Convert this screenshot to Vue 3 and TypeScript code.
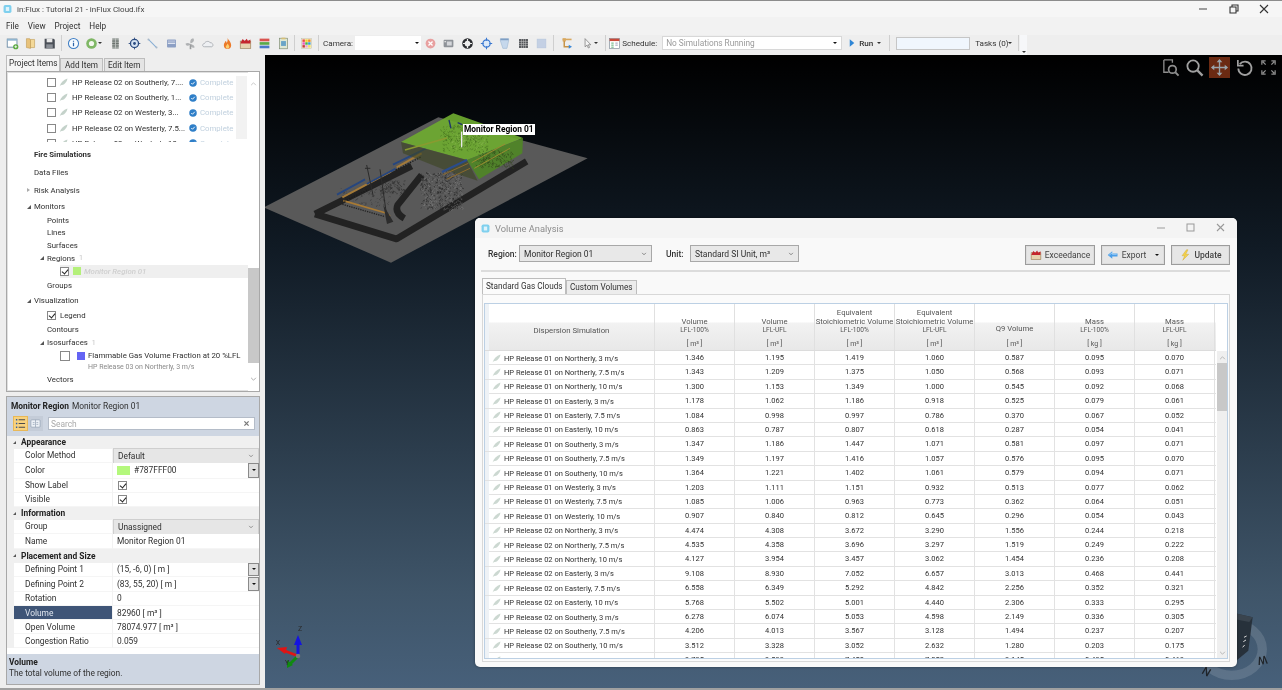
<script setup lang="ts">
// in:Flux main window with the Volume Analysis dialog floating over the 3D view

interface ToolIcon {
  svg: string;
  caret?: boolean;
}

const ic = {
  add: '<rect x="1.5" y="2.5" width="12" height="10" fill="#fff" stroke="#5b7f9c"/><rect x="1.5" y="2.5" width="12" height="2" fill="#8fb4d0"/><circle cx="12" cy="12" r="3.2" fill="#58a83c"/><path d="M10.3 12h3.4M12 10.3v3.4" stroke="#fff"/>',
  folder: '<path d="M3 2h4l1 2v10l-5-1z" fill="#e8c27a" stroke="#b58a3c" stroke-width=".6"/><path d="M8 3h5v10H8z" fill="#f3d898" stroke="#b58a3c" stroke-width=".6"/>',
  save: '<path d="M2 2h11l1.500 1.500V14H2z" fill="#4a4f57"/><rect x="4.500" y="2" width="7" height="4.500" fill="#e8e8e8"/><rect x="4" y="9" width="8" height="5" fill="#8a8f96"/>',
  info: '<circle cx="8" cy="8" r="6.200" fill="#f7fbff" stroke="#3f7ec4" stroke-width="1.300"/><path d="M8 4.500v1.300M8 7v4.500" stroke="#2a62a8" stroke-width="1.500"/>',
  play: '<circle cx="8" cy="8" r="6.500" fill="#7fb765"/><circle cx="8" cy="8" r="3.200" fill="#f2f7ee"/>',
  rack: '<rect x="4" y="1.500" width="8" height="13" fill="#9aa09c"/><path d="M4 5h8M4 8h8M4 11h8" stroke="#5f6663"/><path d="M8 1.500v13" stroke="#c5c9c6"/>',
  target: '<circle cx="8" cy="8" r="5" fill="#d6e3f2" stroke="#2b4b80" stroke-width="1.600"/><circle cx="8" cy="8" r="1.700" fill="#2b4b80"/><path d="M8 .8v3M8 12.200v3M.8 8h3M12.200 8h3" stroke="#2b4b80" stroke-width="1.100"/>',
  line: '<path d="M3 3l10 10" stroke="#88aed4" stroke-width="1.300"/><circle cx="3" cy="3" r="1.200" fill="#a8b8c8"/><circle cx="13" cy="13" r="1.200" fill="#a8b8c8"/>',
  box: '<rect x="2.500" y="3" width="11" height="10" rx="1" fill="#8c9fc4"/><rect x="3.500" y="7" width="9" height="1.500" fill="#e4e9f3"/><rect x="3.500" y="4" width="9" height="2.200" fill="#aebbd6"/>',
  fan: '<path d="M8 9c-3 3-6 2-6-1 2-1 4-1 6 1zM8 8C7 4 9 1 12 2c1 3-1 5-4 6zM8 9c2 0 5 1 5 4-3 1-5-1-5-4z" fill="#b0b2b4"/><rect x="7" y="9" width="2" height="6" fill="#9a9c9e"/>',
  cloud: '<path d="M3 12c-3 0-3-3.500 0-4 1-3 6-3.500 7-1 3-.5 5 4 2 5z" fill="#eef0f3" stroke="#a4a8ae"/>',
  flame: '<path d="M8 1c1 3 4.500 5 4.500 9A4.500 4.500 0 0 1 3.500 10C3.500 7.500 5 7 5.500 5c1 .5 1.500 1.500 1.500 2.500C8 6 8.500 3.500 8 1z" fill="#ec7a2a"/><path d="M8 8c1 1.500 2.200 2.500 2.200 4a2.200 2.200 0 0 1-4.400 0C5.800 11 7.500 10 8 8z" fill="#fbd070"/>',
  exceed: '<rect x="1.500" y="5" width="13" height="9" fill="#e6d2ae" stroke="#8c6f45" stroke-width=".7"/><path d="M2 7l2.500-4.500L7 5l2.500-3L11 5l3-2v5H2z" fill="#c4262e"/>',
  stack: '<rect x="2" y="2" width="12" height="3.300" fill="#d9534f"/><rect x="2" y="6.300" width="12" height="3.300" fill="#5aa84a"/><rect x="2" y="10.600" width="12" height="3.300" fill="#4a78c8"/>',
  report: '<rect x="3" y="1.500" width="10" height="13" fill="#dfe8d4" stroke="#7c8a70" stroke-width=".8"/><rect x="5" y="5" width="6" height="6" fill="#6aa5c8"/><rect x="5.500" y=".8" width="5" height="2" fill="#d8c078"/>',
  palette: '<rect x="2" y="2" width="12" height="12" fill="#f4f0d4" stroke="#b8b498" stroke-width=".5"/><rect x="3" y="3" width="3" height="3" fill="#e84a4a"/><rect x="6.500" y="3" width="3" height="3" fill="#f4d030"/><rect x="10" y="3" width="3" height="3" fill="#f08a2a"/><rect x="3" y="6.500" width="3" height="3" fill="#e85ac8"/><rect x="6.500" y="6.500" width="3" height="3" fill="#4ab848"/><rect x="10" y="6.500" width="3" height="3" fill="#3a9ae0"/><rect x="3" y="10" width="3" height="3" fill="#c83a3a"/><rect x="6.500" y="10" width="3" height="3" fill="#e8a8d8"/><rect x="10" y="10" width="3" height="3" fill="#f4e060"/>',
  stop: '<circle cx="8" cy="8" r="6" fill="#e8a0a0"/><path d="M5.500 5.500l5 5M10.500 5.500l-5 5" stroke="#fff" stroke-width="1.600"/>',
  film: '<rect x="2" y="3.500" width="12" height="9" rx="1" fill="#8e9298"/><rect x="6" y="5.500" width="6" height="5" fill="#d4d6da"/><rect x="3" y="5" width="2" height="1.500" fill="#e4e4e4"/>',
  ring: '<circle cx="8" cy="8" r="5" fill="none" stroke="#2a2c30" stroke-width="3"/><path d="M8 2.500v2.500M8 11v2.500M2.500 8H5M11 8h2.500" stroke="#eee" stroke-width="1.500"/>',
  aim: '<circle cx="8" cy="8" r="4.500" fill="#dce9f8" stroke="#3a78d0" stroke-width="1.500"/><path d="M8 1v3.500M8 11.500V15M1 8h3.500M11.500 8H15" stroke="#3a78d0" stroke-width="1.300"/>',
  page: '<path d="M3 2h10v3l-2 9H6L3 5z" fill="#c6d8ec" stroke="#9ab4d0" stroke-width=".7"/><rect x="3" y="2" width="10" height="2" fill="#7f9fc4"/>',
  grid: '<rect x="2.500" y="2.500" width="11" height="11" fill="#55585c"/><path d="M2.500 5.500h11M2.500 8h11M2.500 10.500h11M5.500 2.500v11M8 2.500v11M10.500 2.500v11" stroke="#ccc" stroke-width=".6"/>',
  hatch: '<rect x="2.500" y="2.500" width="11" height="11" fill="#c4d0e4" stroke="#b4c2da" stroke-width=".5"/>',
  tree: '<rect x="2" y="1.500" width="4" height="4" fill="#d8a860"/><path d="M4 5v7h6" fill="none" stroke="#c89448" stroke-width="1.800"/><path d="M2 2h11v2H2z" fill="#d8a860"/><path d="M9.500 9.500l4 2.500-4 2.500z" fill="#3a88d8"/>',
  cursor: '<path d="M5 2v10l2.500-2 1.500 3.500 1.500-.7L9 9.500h3z" fill="#f4f4f4" stroke="#6a6a6a" stroke-width=".8"/>',
  calendar: '<rect x="2" y="2" width="12" height="12" fill="#fff" stroke="#7c8a98" stroke-width=".8"/><rect x="2" y="2" width="12" height="3" fill="#c84a3a"/><path d="M4 7.500h3M4 10h3M4 12.500h3" stroke="#3a9a5a"/><path d="M9 7.500h3M9 10h3" stroke="#88a"/>',
};

const fileTools: ToolIcon[] = [{ svg: ic.add }, { svg: ic.folder }, { svg: ic.save }];
const itemTools: ToolIcon[] = [
  { svg: ic.info },
  { svg: ic.play, caret: true },
  { svg: ic.rack },
  { svg: ic.target },
  { svg: ic.line },
  { svg: ic.box },
  { svg: ic.fan },
  { svg: ic.cloud },
  { svg: ic.flame },
  { svg: ic.exceed },
  { svg: ic.stack },
  { svg: ic.report },
];
const viewTools: ToolIcon[] = [
  { svg: ic.stop },
  { svg: ic.film },
  { svg: ic.ring },
  { svg: ic.aim },
  { svg: ic.page },
  { svg: ic.grid },
  { svg: ic.hatch },
];

const releases = [
  "HP Release 02 on Southerly, 7....",
  "HP Release 02 on Southerly, 1...",
  "HP Release 02 on Westerly, 3...",
  "HP Release 02 on Westerly, 7.5...",
  "HP Release 02 on Westerly, 10...",
];

interface TreeRow {
  label: string;
  x: number;
  h: number;
  bold?: boolean;
  arrow?: "open" | "closed";
  count?: string;
  check?: boolean;
  empty?: boolean;
  swatch?: string;
  ghost?: boolean;
  sub?: boolean;
}

// Heights come from the row spacing of the real tree, which is not regular
const treeRows: TreeRow[] = [
  { label: "Fire Simulations", x: 34, h: 17, bold: true },
  { label: "Data Files", x: 34, h: 18 },
  { label: "Risk Analysis", x: 34, h: 18, arrow: "closed" },
  { label: "Monitors", x: 34, h: 15, arrow: "open" },
  { label: "Points", x: 47, h: 12.5 },
  { label: "Lines", x: 47, h: 12.5 },
  { label: "Surfaces", x: 47, h: 13 },
  { label: "Regions", x: 47, h: 12.5, arrow: "open", count: "1" },
  { label: "Monitor Region 01", x: 60, h: 13, check: true, swatch: "#b4f07a", ghost: true },
  { label: "Groups", x: 47, h: 15 },
  { label: "Visualization", x: 34, h: 16.5, arrow: "open" },
  { label: "Legend", x: 47, h: 13.5, check: true },
  { label: "Contours", x: 47, h: 13 },
  { label: "Isosurfaces", x: 47, h: 14, arrow: "open", count: "1" },
  { label: "Flammable Gas Volume Fraction at 20 %LFL", x: 60, h: 12, empty: true, swatch: "#6464f4" },
  { label: "HP Release 03 on Northerly, 3 m/s", x: 88, h: 11, sub: true },
  { label: "Vectors", x: 47, h: 13 },
];

interface PropRow {
  label: string;
  h: number;
  kind: "section" | "text" | "combo" | "color" | "check" | "drop";
  value?: string;
  active?: boolean;
}

const propRows: PropRow[] = [
  { label: "Appearance", h: 12.5, kind: "section" },
  { label: "Color Method", h: 14.5, kind: "combo", value: "Default" },
  { label: "Color", h: 15.5, kind: "color", value: "#787FFF00" },
  { label: "Show Label", h: 14.5, kind: "check" },
  { label: "Visible", h: 13.5, kind: "check" },
  { label: "Information", h: 13, kind: "section" },
  { label: "Group", h: 14.5, kind: "combo", value: "Unassigned" },
  { label: "Name", h: 15, kind: "text", value: "Monitor Region 01" },
  { label: "Placement and Size", h: 13.5, kind: "section" },
  { label: "Defining Point 1", h: 14, kind: "drop", value: "(15, -6, 0) [ m ]" },
  { label: "Defining Point 2", h: 15, kind: "drop", value: "(83, 55, 20) [ m ]" },
  { label: "Rotation", h: 14.5, kind: "text", value: "0" },
  { label: "Volume", h: 14, kind: "text", value: "82960 [ m³ ]", active: true },
  { label: "Open Volume", h: 14, kind: "text", value: "78074.977 [ m³ ]" },
  { label: "Congestion Ratio", h: 14, kind: "text", value: "0.059" },
];

const columns = [
  { top: [], name: "Volume", sub: "LFL-100%", unit: "[ m³ ]" },
  { top: [], name: "Volume", sub: "LFL-UFL", unit: "[ m³ ]" },
  { top: ["Equivalent"], name: "Stoichiometric Volume", sub: "LFL-100%", unit: "[ m³ ]" },
  { top: ["Equivalent"], name: "Stoichiometric Volume", sub: "LFL-UFL", unit: "[ m³ ]" },
  { top: [], name: "Q9 Volume", sub: "", unit: "[ m³ ]" },
  { top: [], name: "Mass", sub: "LFL-100%", unit: "[ kg ]" },
  { top: [], name: "Mass", sub: "LFL-UFL", unit: "[ kg ]" },
];

const results: [string, string][] = [
  ["HP Release 01 on Northerly, 3 m/s", "1.346 1.195 1.419 1.060 0.587 0.095 0.070"],
  ["HP Release 01 on Northerly, 7.5 m/s", "1.343 1.209 1.375 1.050 0.568 0.093 0.071"],
  ["HP Release 01 on Northerly, 10 m/s", "1.300 1.153 1.349 1.000 0.545 0.092 0.068"],
  ["HP Release 01 on Easterly, 3 m/s", "1.178 1.062 1.186 0.918 0.525 0.079 0.061"],
  ["HP Release 01 on Easterly, 7.5 m/s", "1.084 0.998 0.997 0.786 0.370 0.067 0.052"],
  ["HP Release 01 on Easterly, 10 m/s", "0.863 0.787 0.807 0.618 0.287 0.054 0.041"],
  ["HP Release 01 on Southerly, 3 m/s", "1.347 1.186 1.447 1.071 0.581 0.097 0.071"],
  ["HP Release 01 on Southerly, 7.5 m/s", "1.349 1.197 1.416 1.057 0.576 0.095 0.070"],
  ["HP Release 01 on Southerly, 10 m/s", "1.364 1.221 1.402 1.061 0.579 0.094 0.071"],
  ["HP Release 01 on Westerly, 3 m/s", "1.203 1.111 1.151 0.932 0.513 0.077 0.062"],
  ["HP Release 01 on Westerly, 7.5 m/s", "1.085 1.006 0.963 0.773 0.362 0.064 0.051"],
  ["HP Release 01 on Westerly, 10 m/s", "0.907 0.840 0.812 0.645 0.296 0.054 0.043"],
  ["HP Release 02 on Northerly, 3 m/s", "4.474 4.308 3.672 3.290 1.556 0.244 0.218"],
  ["HP Release 02 on Northerly, 7.5 m/s", "4.535 4.358 3.696 3.297 1.519 0.249 0.222"],
  ["HP Release 02 on Northerly, 10 m/s", "4.127 3.954 3.457 3.062 1.454 0.236 0.208"],
  ["HP Release 02 on Easterly, 3 m/s", "9.108 8.930 7.052 6.657 3.013 0.468 0.441"],
  ["HP Release 02 on Easterly, 7.5 m/s", "6.558 6.349 5.292 4.842 2.256 0.352 0.321"],
  ["HP Release 02 on Easterly, 10 m/s", "5.768 5.502 5.001 4.440 2.306 0.333 0.295"],
  ["HP Release 02 on Southerly, 3 m/s", "6.278 6.074 5.053 4.598 2.149 0.336 0.305"],
  ["HP Release 02 on Southerly, 7.5 m/s", "4.206 4.013 3.567 3.128 1.494 0.237 0.207"],
  ["HP Release 02 on Southerly, 10 m/s", "3.512 3.328 3.052 2.632 1.280 0.203 0.175"],
  ["HP Release 02 on Westerly, 3 m/s", "9.795 9.593 7.450 7.052 3.145 0.495 0.468"],
];

// Deterministic scatter of short strokes for the plant equipment in the 3D view
function clutter(seed: number, count: number, cx: number, cy: number, w: number, h: number): string {
  let s = seed;
  const next = () => {
    s = (s * 9301 + 49297) % 233280;
    return s / 233280;
  };
  let d = "";
  for (let i = 0; i < count; i++) {
    const x = cx + (next() - 0.5) * w;
    const y = cy + (next() - 0.5) * h;
    const dx = (next() - 0.5) * 12;
    const dy = (next() - 0.5) * 12;
    d += `M${x.toFixed(1)} ${y.toFixed(1)}l${dx.toFixed(1)} ${dy.toFixed(1)}`;
  }
  return d;
}

const towerDark = clutter(7, 300, 530, 303, 125, 110);
const towerLight = clutter(61, 260, 530, 303, 125, 110);
const boxDark = clutter(19, 230, 600, 145, 140, 80);
const boxLight = clutter(83, 70, 610, 150, 100, 50);
const sideMess = clutter(31, 150, 690, 207, 105, 50);
const craneMess = clutter(43, 110, 385, 292, 75, 40);
const rackMess = clutter(97, 90, 300, 320, 150, 50);
</script>

<template>
  <div class="app">
    <div class="titlebar">
      <svg class="title-icon" viewBox="0 0 16 16">
        <rect x="1" y="1" width="14" height="14" rx="3" fill="#7fd0ee" />
        <rect x="5" y="4.500" width="6" height="7" fill="#dff3fb" />
      </svg>
      <span class="title-text">in:Flux : Tutorial 21 - inFlux Cloud.ifx</span>
      <div class="win-controls">
        <svg viewBox="0 0 30 14"><path d="M10 7h8" stroke="#444" stroke-width="1" /></svg>
        <svg viewBox="0 0 30 14"><path d="M11 5h6v6h-6zM13 5V3h6v6h-2" fill="none" stroke="#333" stroke-width="1.100" /></svg>
        <svg viewBox="0 0 30 14"><path d="M11 3l8 8M19 3l-8 8" stroke="#333" stroke-width="1.100" /></svg>
      </div>
    </div>

    <div class="menubar">
      <span>File</span><span>View</span><span>Project</span><span>Help</span>
    </div>

    <div class="toolbar">
      <div class="tool-group first">
        <div v-for="(t, i) in fileTools" :key="i" class="tool"><svg viewBox="0 0 16 16" v-html="t.svg"></svg></div>
      </div>
      <i class="tsep"></i>
      <div class="tool-group">
        <div v-for="(t, i) in itemTools" :key="i" class="tool" :class="{ 'has-caret': t.caret }">
          <svg viewBox="0 0 16 16" v-html="t.svg"></svg>
          <b v-if="t.caret" class="mini-caret over"></b>
        </div>
      </div>
      <i class="tsep"></i>
      <div class="tool"><svg viewBox="0 0 16 16" v-html="ic.palette"></svg></div>
      <i class="tsep"></i>
      <span class="tb-label camera">Camera:</span>
      <div class="camera-box"><b class="mini-caret dark"></b></div>
      <div class="tool-group cams">
        <div v-for="(t, i) in viewTools" :key="i" class="tool"><svg viewBox="0 0 16 16" v-html="t.svg"></svg></div>
      </div>
      <i class="tsep"></i>
      <div class="tool wide first-wide"><svg viewBox="0 0 16 16" v-html="ic.tree"></svg></div>
      <div class="tool wide">
        <svg viewBox="0 0 16 16" v-html="ic.cursor"></svg>
        <b class="mini-caret over"></b>
      </div>
      <i class="tsep after-cursor"></i>
      <div class="tool cal"><svg viewBox="0 0 16 16" v-html="ic.calendar"></svg></div>
      <span class="tb-label schedule">Schedule:</span>
      <div class="sim-box">No Simulations Running<b class="mini-caret dark"></b></div>
      <svg class="run-icon" viewBox="0 0 8 12"><path d="M1 1l6 5-6 5z" fill="#2f86d6" /></svg>
      <span class="tb-label run">Run</span>
      <b class="mini-caret"></b>
      <i class="tsep run-sep"></i>
      <div class="progress"></div>
      <span class="tb-label tasks">Tasks (0)</span>
      <b class="mini-caret"></b>
      <i class="tsep task-sep"></i>
      <div class="overflow"><b class="mini-caret"></b></div>
    </div>

    <div class="main">
      <aside class="side">
        <div class="tabs">
          <span class="tab active">Project Items</span>
          <span class="tab">Add Item</span>
          <span class="tab">Edit Item</span>
        </div>

        <div class="tree-panel">
          <div class="tree-scroll">
            <div class="release-list">
              <div v-for="r in releases" :key="r" class="release">
                <i class="box"></i>
                <svg class="leaf" viewBox="0 0 16 16"><path d="M1 15C3 8 8 3 15 1c-1 7-6 12-12 12z" fill="#c4d2ca" /></svg>
                <span class="release-name">{{ r }}</span>
                <svg class="done" viewBox="0 0 16 16"><circle cx="8" cy="8" r="7.500" fill="#2f7fc8" /><path d="M4.500 8l2.500 2.500 4.500-5" fill="none" stroke="#fff" stroke-width="1.800" /></svg>
                <span class="complete">Complete</span>
              </div>
            </div>
            <div class="release-gutter"></div>
            <svg class="scroll-arrow up" viewBox="0 0 8 5"><path d="M1 4l3-3 3 3" fill="none" stroke="#aaa" /></svg>
            <svg class="scroll-arrow down" viewBox="0 0 8 5"><path d="M1 1l3 3 3-3" fill="none" stroke="#aaa" /></svg>
          </div>

          <div
            v-for="row in treeRows"
            :key="row.label"
            class="tree-row"
            :class="{ bold: row.bold, ghost: row.ghost, sub: row.sub, selected: row.ghost }"
            :style="{ height: row.h + 'px', paddingLeft: row.x - 7 + 'px' }"
          >
            <i v-if="row.arrow" class="arrow" :class="row.arrow"></i>
            <i v-if="row.check" class="box checked"></i>
            <i v-if="row.empty" class="box empty-box"></i>
            <i v-if="row.swatch" class="swatch" :style="{ background: row.swatch }"></i>
            <span>{{ row.label }}</span>
            <span v-if="row.count" class="count">{{ row.count }}</span>
          </div>

          <div class="tree-bar">
            <svg class="bar-arrow" viewBox="0 0 8 5"><path d="M1 4l3-3 3 3" fill="none" stroke="#bbb" /></svg>
            <div class="bar-thumb"></div>
            <svg class="bar-arrow end" viewBox="0 0 8 5"><path d="M1 1l3 3 3-3" fill="none" stroke="#999" /></svg>
          </div>
        </div>

        <div class="props">
          <div class="props-head">
            <div class="props-title"><b>Monitor Region</b><span>Monitor Region 01</span></div>
            <div class="props-tools">
              <div class="mode on">
                <svg viewBox="0 0 12 12"><path d="M1 2h1.500M1 6h1.500M1 10h1.500" stroke="#2f5fa8" stroke-width="1.600" /><path d="M4 2h7M4 6h7M4 10h7" stroke="#4a4a4a" stroke-width="1.100" /></svg>
              </div>
              <div class="mode">
                <svg viewBox="0 0 12 12"><rect x="1" y="2" width="10" height="8" rx="1" fill="#eef2f7" stroke="#8a99ac" stroke-width=".7" /><path d="M6 2v8M3 5h2M7 5h2M3 7h2M7 7h2" stroke="#8a99ac" stroke-width=".7" /></svg>
              </div>
              <div class="search">
                <span>Search</span>
                <svg viewBox="0 0 10 10"><path d="M2 2l6 6M8 2l-6 6" stroke="#777" stroke-width="1.800" /></svg>
              </div>
            </div>
          </div>

          <div class="prop-list">
            <div
              v-for="row in propRows"
              :key="row.label"
              class="prop-row"
              :class="row.kind === 'section' ? 'section' : ''"
              :style="{ height: row.h + 'px' }"
            >
              <template v-if="row.kind === 'section'">
                <i class="arrow open small"></i><b>{{ row.label }}</b>
              </template>
              <template v-else>
                <div class="prop-name" :class="{ active: row.active }">{{ row.label }}</div>
                <div class="prop-value" :class="row.kind">
                  <i v-if="row.kind === 'color'" class="color-chip"></i>
                  <i v-if="row.kind === 'check'" class="box checked"></i>
                  <span>{{ row.value }}</span>
                  <svg v-if="row.kind === 'combo'" class="chev" viewBox="0 0 8 5"><path d="M1.500 1L4 3.500 6.500 1" fill="none" stroke="#777" /></svg>
                  <div v-if="row.kind === 'color' || row.kind === 'drop'" class="drop-btn"><b class="mini-caret dark"></b></div>
                </div>
              </template>
            </div>
          </div>

          <div class="prop-help">
            <b>Volume</b>
            <span>The total volume of the region.</span>
          </div>
        </div>
      </aside>

      <section class="viewport">
        <svg class="scene" viewBox="265 55 1017 633">
          <g transform="translate(265 90) scale(.3333)">
            <path d="M0 350L520 82 968 205 378 518 0 354z" fill="#595959" />
            <path d="M150 372L440 228M150 372L395 447 785 214M470 255L398 345Q388 368 418 385" fill="none" stroke="#222" stroke-width="20" stroke-linejoin="round" />

            <!-- plant modules -->
            <path :d="towerDark" stroke="#1f1f1f" stroke-width="1.700" />
            <path :d="towerLight" stroke="#7d7d7d" stroke-width="1.500" />
            <path :d="craneMess" stroke="#2a2a2a" stroke-width="1.700" />
            <path :d="rackMess" stroke="#2e2e2e" stroke-width="1.400" />
            <path d="M235 332L360 368 375 378" stroke="#a87a34" stroke-width="5" fill="none" />
            <path d="M232 343L360 380" stroke="#242424" stroke-width="4" stroke-dasharray="4 3" fill="none" />
            <path d="M232 322L378 245M395 232L470 190" stroke="#a47a38" stroke-width="6" fill="none" />
            <path d="M216 314L300 268M305 282L392 236M384 224L486 174" stroke="#26467f" stroke-width="5.500" fill="none" />
            <path d="M238 334L310 298M392 240L470 200" stroke="#1c1c1c" stroke-width="4" stroke-dasharray="4 4" fill="none" />
            <path d="M345 238L367 390M305 225L325 320M300 235H316" stroke="#2a2a2a" stroke-width="3" fill="none" />
            <path d="M355 345L385 395 366 402z" fill="#2c2c2c" />

            <!-- monitor region volume -->
            <path d="M408 156L565 70 774 144 606 210z" fill="#6eaa30" fill-opacity=".92" />
            <path d="M408 156L606 210 638 272 540 240 414 190z" fill="#3c4522" fill-opacity=".6" />
            <path d="M606 210L774 144 772 190 642 268z" fill="#4f8a22" fill-opacity=".85" />
            <path :d="boxDark" stroke="#3b6519" stroke-width="1.800" stroke-opacity=".85" />
            <path :d="boxLight" stroke="#a6c870" stroke-width="1.400" stroke-opacity=".7" />
            <path :d="sideMess" stroke="#2f421a" stroke-width="1.800" />
            <path d="M420 180L546 144" stroke="#8a9a30" stroke-width="5" fill="none" />
            <path d="M620 218L720 162M628 235L735 175" stroke="#9a8a30" stroke-width="3" fill="none" />
            <path d="M531 246L606 210" stroke="#2a4c8c" stroke-width="6" fill="none" />
            <path d="M535 254L610 220M545 268L615 235" stroke="#8e6a2c" stroke-width="3" fill="none" />
            <path d="M578 98L592 104M552 90L558 115" stroke="#1f3468" stroke-width="4" fill="none" />
            <path d="M590 125V172" stroke="#e8e8e8" stroke-width="4" />
          </g>

          <!-- axis triad -->
          <g>
            <path d="M298 656V642" stroke="#1414e0" stroke-width="3" />
            <path d="M294 645L298 635 302 645z" fill="#1414e0" />
            <path d="M298 656L285 651" stroke="#e01414" stroke-width="2.500" />
            <path d="M287 647L277 648 285 654z" fill="#e01414" />
            <path d="M298 656L290 664" stroke="#108a10" stroke-width="3" />
            <path d="M287 660L287 668 293 665z" fill="#108a10" />
            <circle cx="298" cy="656" r="2.300" fill="#777" />
            <text x="300" y="631" class="axis" text-anchor="middle">Z</text>
            <text x="278" y="645" class="axis" text-anchor="middle">X</text>
            <text x="287" y="665" class="axis" text-anchor="middle">Y</text>
          </g>

          <!-- view cube behind the dialog -->
          <g transform="translate(1100 560) scale(.3333)">
            <ellipse cx="395" cy="268" rx="92" ry="78" fill="none" stroke="#fff" stroke-opacity=".13" stroke-width="28" />
            <path d="M405 160L458 172 445 272 405 305z" fill="#27313b" />
            <path d="M405 160L458 172 448 186 405 178z" fill="#3a444e" />
            <path d="M432 232L440 228M430 245L438 240M428 262L434 255" stroke="#d8d8d8" stroke-width="3" />
            <text x="487" y="298" class="compass" text-anchor="middle" dominant-baseline="middle" transform="rotate(170 487 298)">W</text>
            <text x="318" y="337" class="compass" text-anchor="middle" dominant-baseline="middle" transform="rotate(30 318 337)">N</text>
          </g>
        </svg>

        <div class="region-label">Monitor Region 01</div>

        <div class="view-tools">
          <svg viewBox="0 0 20 20"><path d="M3 2h9v3M3 2v13h5" fill="none" stroke="#8d8d8d" stroke-width="1.400" /><circle cx="12" cy="12" r="4" fill="none" stroke="#8d8d8d" stroke-width="1.800" /><path d="M15 15l3.500 3.500" stroke="#8d8d8d" stroke-width="2" /></svg>
          <svg viewBox="0 0 20 20"><circle cx="8.500" cy="8.500" r="6" fill="none" stroke="#a0a0a0" stroke-width="1.900" /><path d="M13 13l5.500 5.500" stroke="#a0a0a0" stroke-width="2.400" /></svg>
          <div class="pan-btn">
            <svg viewBox="0 0 20 20"><path d="M10 2v16M2 10h16" stroke="#9aa4aa" stroke-width="1.400" /><path d="M10 1l3 3.500H7zM10 19l3-3.500H7zM1 10l3.500-3v6zM19 10l-3.500-3v6z" fill="#9aa4aa" /></svg>
          </div>
          <svg viewBox="0 0 20 20"><path d="M5 6.500A7 7 0 1 1 3.500 11" fill="none" stroke="#a0a0a0" stroke-width="1.900" /><path d="M3 2v6h6" fill="none" stroke="#a0a0a0" stroke-width="1.800" /></svg>
          <svg viewBox="0 0 20 20"><path d="M3 7V3h4M17 7V3h-4M3 13v4h4M17 13v4h-4M4 4l3 3M16 4l-3 3M4 16l3-3M16 16l-3-3" fill="none" stroke="#8f8f8f" stroke-width="1.300" /></svg>
        </div>

        <div class="dialog">
          <div class="dlg-title">
            <svg viewBox="0 0 16 16"><rect x="1" y="1" width="14" height="14" rx="3" fill="#7fd0ee" /><rect x="5" y="4.500" width="6" height="7" fill="#dff3fb" /></svg>
            <span>Volume Analysis</span>
            <div class="dlg-controls">
              <svg viewBox="0 0 30 12"><path d="M11 6h8" stroke="#aaa" stroke-width="1.200" /></svg>
              <svg viewBox="0 0 30 12"><rect x="11" y="2" width="7" height="7" fill="none" stroke="#999" /></svg>
              <svg viewBox="0 0 30 12"><path d="M11 2l7 7M18 2l-7 7" stroke="#999" stroke-width="1.100" /></svg>
            </div>
          </div>

          <div class="dlg-form">
            <b class="field-label">Region:</b>
            <div class="combo region-combo">
              <span>Monitor Region 01</span>
              <svg viewBox="0 0 8 5"><path d="M1.500 1L4 3.500 6.500 1" fill="none" stroke="#666" /></svg>
            </div>
            <b class="field-label unit-label">Unit:</b>
            <div class="combo unit-combo">
              <span>Standard SI Unit, m³</span>
              <svg viewBox="0 0 8 5"><path d="M1.500 1L4 3.500 6.500 1" fill="none" stroke="#666" /></svg>
            </div>
            <div class="dlg-actions">
              <button class="btn exceed">
                <svg viewBox="0 0 16 16" v-html="ic.exceed"></svg>
                <span>Exceedance</span>
              </button>
              <button class="btn export">
                <svg viewBox="0 0 16 16"><path d="M1 8l6-5v3h7v4H7v3z" fill="#4a9ee8" /><path d="M3 8l4-3v2h6" fill="none" stroke="#b8dcf8" /></svg>
                <span>Export</span>
                <b class="mini-caret dark"></b>
              </button>
              <button class="btn update">
                <svg viewBox="0 0 16 16"><path d="M10 1L4 9h3.500L5 15l8-8H9l3-6z" fill="#f4d24a" stroke="#c8a028" stroke-width=".5" /></svg>
                <b>Update</b>
              </button>
            </div>
          </div>

          <div class="dlg-rule"></div>

          <div class="dlg-tabs">
            <span class="tab active">Standard Gas Clouds</span>
            <span class="tab">Custom Volumes</span>
          </div>

          <div class="tab-body">
            <div class="grid-frame">
              <div class="grid-head">
                <div class="head-cell first-col">Dispersion Simulation</div>
                <div v-for="(c, i) in columns" :key="i" class="head-cell" :class="{ q9: !c.sub }">
                  <span v-for="t in c.top" :key="t" class="head-name">{{ t }}</span>
                  <span class="head-name">{{ c.name }}</span>
                  <span v-if="c.sub" class="head-sub">{{ c.sub }}</span>
                  <span class="head-unit">{{ c.unit }}</span>
                </div>
              </div>

              <div class="grid-body">
                <div class="rows">
                  <div v-for="r in results" :key="r[0]" class="grid-row">
                    <div class="sim-cell">
                      <svg viewBox="0 0 16 16"><path d="M1 15C3 8 8 3 15 1c-1 7-6 12-12 12z" fill="#ccd8d1" /></svg>
                      <span>{{ r[0] }}</span>
                    </div>
                    <div v-for="(v, i) in r[1].split(' ')" :key="i" class="num-cell">{{ v }}</div>
                  </div>
                </div>
                <div class="grid-bar">
                  <svg viewBox="0 0 8 5"><path d="M1 4l3-3 3 3" fill="none" stroke="#aaa" /></svg>
                  <div class="grid-thumb"></div>
                  <svg class="end" viewBox="0 0 8 5"><path d="M1 1l3 3 3-3" fill="none" stroke="#aaa" /></svg>
                </div>
              </div>
            </div>
          </div>
        </div>
      </section>
    </div>
  </div>
</template>

<style>
html,
body {
  margin: 0;
  background: #000;
}
</style>

<style scoped>
.app {
  width: 1282px;
  height: 690px;
  box-sizing: border-box;
  display: flex;
  flex-direction: column;
  overflow: hidden;
  border-top: 1px solid #8c8c8c;
  border-bottom: 2px solid #a0a0a0;
  background: #f0f0f0;
  font-family: Roboto, "Noto Sans", sans-serif;
  font-size: 7.8px;
  color: #303030;
  /* the reference is a downscaled capture, its edges are soft */
  filter: blur(0.3px);
}

svg {
  display: block;
}

/* Window chrome */
.titlebar {
  height: 16px;
  display: flex;
  align-items: center;
  background: #f6f6f6;
  padding-left: 3px;
  flex: none;
}

.title-icon {
  width: 9px;
  height: 10px;
}

.title-text {
  margin-left: 5px;
  font-size: 8px;
  color: #444;
}

.win-controls {
  margin-left: auto;
  display: flex;
  padding-right: 3px;
}

.win-controls svg {
  width: 30px;
  height: 14px;
}

.menubar {
  height: 18px;
  display: flex;
  align-items: center;
  gap: 9px;
  padding-left: 6px;
  background: #f2f2f2;
  font-size: 8.2px;
  flex: none;
}

.toolbar {
  height: 20px;
  box-sizing: border-box;
  padding-bottom: 4px;
  display: flex;
  align-items: center;
  background: #eeeeee;
  flex: none;
}

.tool-group {
  display: flex;
}

.tool-group.first {
  padding-left: 3px;
}

.tool {
  width: 18.6px;
  height: 16px;
  display: flex;
  justify-content: center;
  align-items: center;
  position: relative;
  flex: none;
}

.tool.has-caret {
  margin-right: 5.5px;
}

.tool svg {
  width: 13px;
  height: 13px;
}

.tool.wide {
  width: 20px;
}

.tool.first-wide {
  margin-left: 1px;
}

.tool.cal {
  width: 16px;
}

.tsep {
  width: 1px;
  height: 16px;
  background: #cfcfcf;
  margin: 0 2px;
  flex: none;
}

.tsep.after-cursor {
  margin: 0 0 0 8px;
}

.tsep.run-sep {
  margin: 0 6px 0 8px;
}

.tsep.task-sep {
  margin: 0 1px 0 6px;
}

.tb-label {
  font-size: 8.1px;
  color: #333;
  white-space: nowrap;
}

.tb-label.camera {
  margin-left: 2px;
  width: 32px;
  flex: none;
}

.tb-label.schedule {
  margin-left: 0;
  width: 40px;
  flex: none;
}

.tb-label.run {
  margin: 0 3px 0 4px;
  width: 15px;
  font-weight: 500;
  flex: none;
}

.tb-label.tasks {
  margin: 0 3px 0 5px;
  width: 30px;
  flex: none;
}

.camera-box {
  width: 66px;
  height: 14px;
  background: #fff;
  position: relative;
  flex: none;
}

.camera-box .mini-caret {
  position: absolute;
  right: 2px;
  top: 6px;
}

.mini-caret {
  display: inline-block;
  width: 0;
  height: 0;
  border: 2px solid transparent;
  border-top: 2.500px solid #333;
  border-bottom: 0;
  flex: none;
}

.mini-caret.dark {
  border-top-color: #111;
}

.mini-caret.over {
  position: absolute;
  right: -1px;
  top: 7px;
}

.sim-box {
  width: 180px;
  height: 14px;
  box-sizing: border-box;
  background: #fff;
  border: 1px solid #d8d8d8;
  color: #9a9a9a;
  padding-left: 3px;
  font-size: 8.3px;
  line-height: 12px;
  position: relative;
  flex: none;
}

.sim-box .mini-caret {
  position: absolute;
  right: 4px;
  top: 5px;
}

.run-icon {
  width: 6px;
  height: 10px;
  margin-left: 7px;
  flex: none;
}

.progress {
  width: 74px;
  height: 13px;
  box-sizing: border-box;
  background: #f0f6fd;
  border: 1px solid #c6c6c6;
  flex: none;
}

.overflow {
  width: 7px;
  height: 20px;
  margin-bottom: -4px;
  background: #f6f7f9;
  display: flex;
  justify-content: center;
  align-items: flex-end;
  padding-bottom: 2px;
  box-sizing: border-box;
}

/* Main split */
.main {
  flex: 1;
  display: flex;
  min-height: 0;
}

.side {
  width: 265px;
  flex: none;
  box-sizing: border-box;
  padding: 0 5px 0 6px;
  background: #eeeeee;
}

/* Tabs */
.tabs,
.dlg-tabs {
  display: flex;
  align-items: flex-end;
}

.tabs {
  height: 16px;
}

.tab {
  height: 13px;
  line-height: 12px;
  padding: 0 3.500px;
  background: #e4e4e4;
  border: 1px solid #bdbdbd;
  border-bottom: none;
  margin-right: 1px;
  font-size: 8.200px;
  box-sizing: border-box;
  white-space: nowrap;
}

.tab.active {
  height: 16px;
  line-height: 15px;
  padding: 0 2px;
  background: #f5f5f5;
  margin-right: 0;
}

/* Project tree */
.tree-panel {
  height: 321px;
  box-sizing: border-box;
  background: #fff;
  border: 1px solid #a8a8a8;
  outline: 1px solid #e0e0e0;
  outline-offset: -2px;
  position: relative;
  overflow: hidden;
}

.tree-scroll {
  height: 74px;
  position: relative;
  overflow: hidden;
  padding-top: 3px;
  box-sizing: border-box;
}

.release-list {
  padding-left: 40px;
  height: 67px;
  overflow: hidden;
}

.release {
  height: 15.200px;
  display: flex;
  align-items: center;
}

.box {
  display: block;
  width: 9px;
  height: 9px;
  box-sizing: border-box;
  background: #fff;
  border: 1px solid #888;
  flex: none;
  position: relative;
}

.box.checked::after {
  content: "";
  position: absolute;
  left: 2px;
  top: 0;
  width: 3px;
  height: 5px;
  border: solid #222;
  border-width: 0 1.500px 1.500px 0;
  transform: rotate(40deg);
}

.leaf {
  width: 9px;
  height: 9px;
  margin-left: 3px;
  flex: none;
}

.release-name {
  margin-left: 4px;
  width: 117px;
  white-space: nowrap;
  flex: none;
}

.done {
  width: 8px;
  height: 8px;
  flex: none;
}

.complete {
  margin-left: 3px;
  color: #c0d0de;
  font-size: 7.8px;
}

.release-gutter {
  position: absolute;
  left: 229px;
  top: 4px;
  height: 63px;
  width: 11px;
  background: #f2f2f2;
}

.scroll-arrow {
  position: absolute;
  left: 243px;
  width: 7px;
  height: 4px;
}

.scroll-arrow.up {
  top: 11px;
}

.scroll-arrow.down {
  display: none;
}

.tree-row {
  display: flex;
  align-items: center;
  position: relative;
  width: 241px;
  box-sizing: border-box;
  white-space: nowrap;
}

.tree-row.bold {
  font-weight: 700;
}

.tree-row.ghost {
  color: #cfcfcf;
  font-style: italic;
  font-weight: 500;
}

.tree-row.selected {
  background: linear-gradient(to right, transparent 53px, #efefef 53px);
}

.tree-row.sub {
  font-size: 7px;
  color: #8a8a8a;
}

.tree-row .box {
  margin-right: 4px;
}

.tree-row .box.empty-box {
  margin-right: 7px;
  width: 10px;
  height: 10px;
}

.swatch {
  display: block;
  width: 8px;
  height: 8px;
  margin-right: 3px;
  flex: none;
}

.arrow {
  position: absolute;
  width: 0;
  height: 0;
  margin-left: -7px;
}

.arrow.open {
  border-style: solid;
  border-width: 0 0 4px 4px;
  border-color: transparent transparent #555 transparent;
}

.arrow.closed {
  border-style: solid;
  border-width: 2.500px 0 2.500px 3px;
  border-color: transparent transparent transparent #aaa;
}

.arrow.small {
  position: static;
  margin: 0 5px 0 6px;
  border-width: 0 0 3px 3px;
}

.count {
  margin-left: 4px;
  color: #c4c4c4;
  font-size: 7px;
}

.tree-bar {
  position: absolute;
  right: 0;
  top: 0;
  bottom: 0;
  width: 11px;
  background: #fff;
  display: flex;
  flex-direction: column;
  align-items: center;
}

.bar-arrow {
  width: 7px;
  height: 4px;
  margin-top: 10px;
}

.bar-arrow.end {
  margin-top: 14px;
}

.bar-thumb {
  width: 11px;
  height: 95px;
  margin-top: 182px;
  background: #c8c8c8;
}

/* Property grid */
.props {
  margin-top: 4px;
  height: 289px;
  box-sizing: border-box;
  border: 1px solid #a8a8a8;
  background: #fff;
  display: flex;
  flex-direction: column;
  font-size: 8.4px;
}

.props-head {
  height: 39px;
  background: #ced6e2;
  flex: none;
  padding: 0 3px 0 4px;
  box-sizing: border-box;
}

.props-title {
  height: 17px;
  display: flex;
  align-items: center;
  gap: 3px;
}

.props-title b {
  font-weight: 700;
  color: #222;
}

.props-tools {
  display: flex;
  align-items: center;
  padding-left: 2px;
  margin-top: 2px;
}

.mode {
  width: 15px;
  height: 15px;
  background: #c4ccd8;
  display: flex;
  align-items: center;
  justify-content: center;
}

.mode.on {
  background: #f8d27e;
  border: 1px solid #e8b858;
  box-sizing: border-box;
}

.mode svg {
  width: 11px;
  height: 11px;
}

.search {
  margin-left: 5px;
  width: 207px;
  height: 13px;
  box-sizing: border-box;
  background: #fff;
  border: 1px solid #b4bcc8;
  display: flex;
  align-items: center;
  justify-content: space-between;
  padding: 0 4px 0 2px;
  color: #aaa;
}

.search svg {
  width: 7px;
  height: 7px;
}

.prop-list {
  flex: 1;
}

.prop-row {
  display: flex;
  align-items: stretch;
  background: #f0f0f0;
  box-sizing: border-box;
}

.prop-row.section {
  align-items: center;
  font-weight: 700;
  color: #222;
}

.prop-row.section b {
  font-weight: 700;
}

.prop-name {
  width: 99px;
  margin-left: 7px;
  background: #fff;
  padding-left: 11px;
  display: flex;
  align-items: center;
  box-sizing: border-box;
  border-bottom: 1px solid #f5f5f5;
  border-right: 1px solid #f2f2f2;
}

.prop-name.active {
  background: #3f5577;
  color: #dfe5ee;
}

.prop-value {
  flex: 1;
  display: flex;
  align-items: center;
  background: #fff;
  padding-left: 4px;
  position: relative;
  border-bottom: 1px solid #f5f5f5;
}

.prop-value.combo {
  background: #e6e6e6;
  border: 1px solid #cfcfcf;
}

.chev {
  position: absolute;
  right: 4px;
  top: 5px;
  width: 6px;
  height: 4px;
}

.color-chip {
  display: block;
  width: 13px;
  height: 9px;
  background: #b4f87c;
  margin-right: 4px;
}

.prop-value.check .box {
  margin-left: 1px;
}

.drop-btn {
  position: absolute;
  right: 0;
  top: 0;
  bottom: 0;
  width: 11px;
  box-sizing: border-box;
  background: #e0e0e0;
  border: 1px solid #8a8a8a;
  display: flex;
  align-items: center;
  justify-content: center;
}

.prop-help {
  height: 30px;
  flex: none;
  background: #ced6e2;
  padding: 3px 2px 0 2px;
  box-sizing: border-box;
  display: flex;
  flex-direction: column;
  gap: 1px;
}

.prop-help b {
  font-weight: 700;
  color: #222;
}

/* 3D viewport */
.viewport {
  flex: 1;
  position: relative;
  overflow: hidden;
  background: linear-gradient(to bottom, #000 0%, #101a24 30%, #3f5569 85%, #47607a 100%);
}

.scene {
  position: absolute;
  inset: 0;
  width: 100%;
  height: 100%;
}

.axis {
  font-size: 7px;
  fill: #2a2a2a;
  font-family: Roboto, sans-serif;
}

.compass {
  font-size: 34px;
  fill: #1f2328;
  font-family: Roboto, sans-serif;
  font-weight: 500;
}

.region-label {
  position: absolute;
  left: 198px;
  top: 69px;
  height: 11px;
  line-height: 11px;
  padding: 0 1px;
  background: #fff;
  color: #000;
  font-size: 8.4px;
  font-weight: 700;
  white-space: nowrap;
}

.view-tools {
  position: absolute;
  right: 4px;
  top: 2px;
  display: flex;
  align-items: center;
  gap: 5px;
}

.view-tools svg {
  width: 19px;
  height: 19px;
}

.pan-btn {
  width: 21px;
  height: 21px;
  background: #6b2a12;
  display: flex;
  align-items: center;
  justify-content: center;
}

/* Volume Analysis dialog */
.dialog {
  position: absolute;
  left: 210px;
  top: 163px;
  width: 762px;
  height: 449px;
  box-sizing: border-box;
  display: flex;
  flex-direction: column;
  background: #f9f9f9;
  border-radius: 5px;
  box-shadow: 0 0 3px rgba(0, 0, 0, 0.4);
}

.dlg-title {
  height: 20px;
  display: flex;
  align-items: center;
  background: #f4f4f4;
  border-radius: 5px 5px 0 0;
  padding-left: 6px;
  color: #8c8c8c;
  font-size: 9.3px;
  flex: none;
}

.dlg-title > svg {
  width: 9px;
  height: 9px;
  margin-right: 5px;
}

.dlg-controls {
  margin-left: auto;
  display: flex;
  padding-right: 1px;
}

.dlg-controls svg {
  width: 30px;
  height: 12px;
}

.dlg-form {
  height: 32px;
  display: flex;
  align-items: center;
  padding: 0 7px 0 13px;
  box-sizing: border-box;
  flex: none;
  font-size: 8.5px;
}

.field-label {
  font-weight: 500;
  color: #333;
  width: 31px;
  flex: none;
}

.unit-label {
  margin-left: 14px;
  width: 24px;
}

.combo {
  height: 17px;
  box-sizing: border-box;
  background: #e8e8e8;
  border: 1px solid #a8a8a8;
  display: flex;
  align-items: center;
  justify-content: space-between;
  padding: 0 4px;
  margin-top: -1px;
}

.combo svg {
  width: 6px;
  height: 4px;
}

.region-combo {
  width: 133px;
}

.unit-combo {
  width: 109px;
}

.dlg-actions {
  margin-left: auto;
  display: flex;
  gap: 6px;
  margin-top: 1px;
}

.btn {
  height: 20px;
  box-sizing: border-box;
  background: #e6e6e6;
  border: 1px solid #9c9c9c;
  outline: 1px solid #ddd;
  outline-offset: -2px;
  display: flex;
  align-items: center;
  justify-content: center;
  gap: 3px;
  padding: 0;
  font: inherit;
  color: #444;
}

.btn svg {
  width: 12px;
  height: 12px;
}

.btn.exceed {
  width: 70px;
}

.btn.export {
  width: 64px;
}

.btn.export .mini-caret {
  margin-left: 6px;
}

.btn.update {
  width: 59px;
}

.btn b {
  font-weight: 500;
}

.dlg-rule {
  height: 2px;
  margin: 0 7px 0 6px;
  background: #dcdcdc;
  flex: none;
}

.dlg-tabs {
  height: 22px;
  padding-left: 7px;
  flex: none;
}

.dlg-tabs .tab {
  height: 14px;
  line-height: 13px;
  background: #ececec;
  padding: 0 3px;
}

.dlg-tabs .tab.active {
  height: 16px;
  line-height: 14px;
  background: #fbfbfb;
  width: 84px;
  text-align: center;
}

.tab-body {
  height: 368px;
  margin: 0 7px;
  box-sizing: border-box;
  border: 1px solid #d8d8d8;
  background: #fbfbfb;
  padding: 8px 1px 0 1px;
  flex: none;
}

.grid-frame {
  height: 356px;
  box-sizing: border-box;
  border: 1px solid #bcd0e4;
  background: #fff;
  overflow: hidden;
}

.grid-head {
  height: 47px;
  display: grid;
  grid-template-columns: 170px repeat(7, 80px);
  width: 731px;
  background: linear-gradient(to bottom, #fff 0 18px, #f2f2f2 19px, #e8e8e8 100%);
  border-bottom: 1px solid #dcdcdc;
  box-sizing: border-box;
}

.head-cell {
  border-right: 1px solid #e0e0e0;
  display: flex;
  flex-direction: column;
  align-items: center;
  justify-content: flex-end;
  padding-bottom: 1px;
  box-sizing: border-box;
  color: #555;
  text-align: center;
}

.head-cell.first-col {
  padding: 0 0 15px 0;
  border-left: 4px solid #eef2f6;
}

.head-name {
  line-height: 9px;
  font-size: 7.7px;
  white-space: nowrap;
}

.head-sub {
  line-height: 9px;
  font-size: 6.600px;
  margin-bottom: 5px;
}

.head-unit {
  line-height: 9px;
  font-size: 7px;
}

.head-cell.q9 .head-unit {
  margin-top: 7px;
}

.grid-body {
  display: flex;
  height: 307px;
  overflow: hidden;
}

.rows {
  width: 731px;
  flex: none;
}

.grid-row {
  height: 14.400px;
  display: grid;
  grid-template-columns: 170px repeat(7, 80px);
  box-sizing: border-box;
  border-bottom: 1px solid #e2e2e2;
  font-size: 7.500px;
}

.sim-cell {
  display: flex;
  align-items: center;
  gap: 3px;
  padding-left: 3px;
  border-left: 4px solid #eef2f6;
  border-right: 1px solid #e2e2e2;
  box-sizing: border-box;
  white-space: nowrap;
  overflow: hidden;
}

.sim-cell svg {
  width: 9px;
  height: 9px;
  flex: none;
}

.num-cell {
  text-align: center;
  line-height: 14px;
  border-right: 1px solid #e2e2e2;
}

.grid-bar {
  width: 11px;
  margin-left: 1px;
  background: #efefef;
  display: flex;
  flex-direction: column;
  align-items: center;
}

.grid-bar svg {
  width: 7px;
  height: 4px;
  margin-top: 5px;
  flex: none;
}

.grid-bar svg.end {
  margin-top: auto;
  margin-bottom: 3px;
}

.grid-thumb {
  width: 11px;
  height: 48px;
  margin-top: 3px;
  background: #c8c8c8;
}
</style>
